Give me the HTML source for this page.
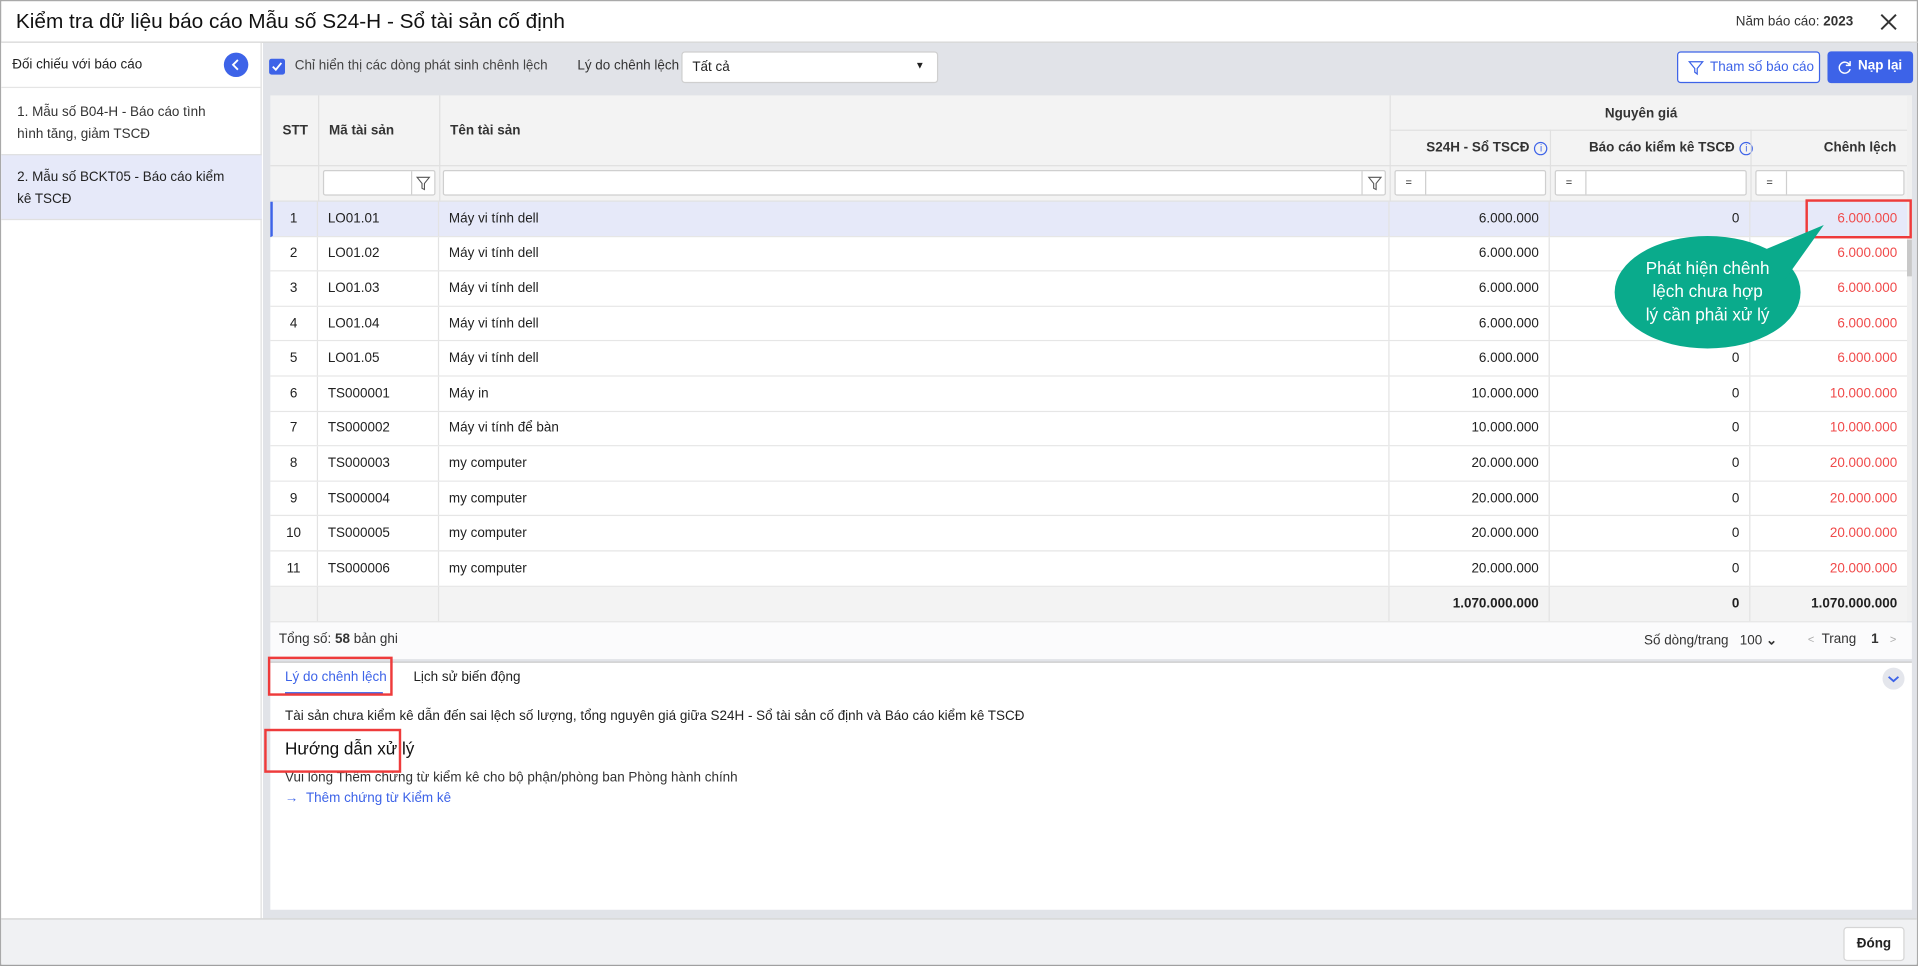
<!DOCTYPE html>
<html><head><meta charset="utf-8">
<style>
*{box-sizing:border-box;margin:0;padding:0}
html,body{width:1918px;height:966px;overflow:hidden;background:#fff}
#w{position:absolute;left:0;top:0;width:1568px;height:790px;transform:scale(1.22321,1.2228);transform-origin:0 0;font-family:"Liberation Sans",sans-serif;color:#212121;font-size:11px;background:#fff;border:1px solid #a9a9a9;border-bottom:2px solid #a0a0a0}
.a{position:absolute}
.cell{position:absolute;top:0;height:100%;border-right:1px solid #e3e3e3;display:flex;align-items:center;padding:0 8px;white-space:nowrap}
.r{justify-content:flex-end}
.row{position:absolute;left:220px;width:1338px;height:28.6px;border-bottom:1px solid #e6e6e6;background:#fff}
.red{color:#f04a4a}
.hd{font-weight:bold;font-size:11px;color:#333}
.inp{position:absolute;background:#fff;border:1px solid #cfcfcf;border-radius:2px}
.info{display:inline-block;width:11px;height:11px;border:1.2px solid #3d63e8;border-radius:50%;color:#3d63e8;font-size:8px;line-height:9px;text-align:center;margin-left:4px;font-weight:normal}
</style></head><body>
<div id="w">
<div class="a" style="left:12px;top:7px;font-size:17px;color:#111">Kiểm tra dữ liệu báo cáo Mẫu số S24-H - Sổ tài sản cố định</div>
<div class="a" style="left:1418px;top:11px;font-size:11px;color:#333">Năm báo cáo: <b>2023</b></div>
<svg class="a" style="left:1535px;top:9px" width="16" height="16"><path d="M2 2L14 14M14 2L2 14" stroke="#333" stroke-width="1.6"/></svg>
<div class="a" style="left:0;top:33px;width:1568px;height:1px;background:#d0d0d0"></div>
<div class="a" style="left:0;top:34px;width:213px;height:716px;background:#fff;border-right:1px solid #e0e0e0"></div>
<div class="a" style="left:9px;top:46px;font-size:11px">Đối chiếu với báo cáo</div>
<div class="a" style="left:182px;top:42px;width:20px;height:20px;border-radius:50%;background:#3d63e8"><svg width="20" height="20"><path d="M11.5 6L7.5 10L11.5 14" stroke="#fff" stroke-width="1.5" fill="none"/></svg></div>
<div class="a" style="left:0;top:70px;width:213px;height:1px;background:#e5e5e5"></div>
<div class="a" style="left:13px;top:82px;line-height:18px;font-size:11px;color:#333">1. Mẫu số B04-H - Báo cáo tình<br>hình tăng, giảm TSCĐ</div>
<div class="a" style="left:0;top:125px;width:213px;height:54px;background:#e6e9f9;border-top:1px solid #e0e0e0;border-bottom:1px solid #e0e0e0"></div>
<div class="a" style="left:13px;top:135px;line-height:18px;font-size:11px;color:#222">2. Mẫu số BCKT05 - Báo cáo kiểm<br>kê TSCĐ</div>
<div class="a" style="left:214px;top:34px;width:1352px;height:716px;background:#e1e3e8"></div>
<div class="a" style="left:219px;top:47px;width:13px;height:13px;background:#3d63e8;border-radius:2px"><svg width="13" height="13"><path d="M3 6.5L5.5 9L10 3.5" stroke="#fff" stroke-width="1.5" fill="none"/></svg></div>
<div class="a" style="left:240px;top:47px;color:#444">Chỉ hiển thị các dòng phát sinh chênh lệch</div>
<div class="a" style="left:471px;top:47px;color:#333">Lý do chênh lệch</div>
<div class="a" style="left:556px;top:41px;width:210px;height:26px;background:#fff;border:1px solid #cfcfcf;border-radius:3px"><span class="a" style="left:8px;top:6px">Tất cả</span><span class="a" style="left:190px;top:6px;font-size:8px">▼</span></div>
<div class="a" style="left:1370px;top:41px;width:117px;height:26px;background:#fff;border:1px solid #3d63e8;border-radius:3px;color:#3d63e8"><svg class="a" style="left:8px;top:6px" width="13" height="13"><path d="M1 1.5H12L7.5 7V11.5L5.5 10V7Z" stroke="#3d63e8" fill="none" stroke-width="1"/></svg><span class="a" style="left:26px;top:6px">Tham số báo cáo</span></div>
<div class="a" style="left:1493px;top:41px;width:70px;height:26px;background:#3d63e8;border-radius:3px;color:#fff;font-weight:bold"><svg class="a" style="left:8px;top:7px" width="12" height="12"><path d="M10 4A4.5 4.5 0 1 0 10.5 7.5" stroke="#fff" fill="none" stroke-width="1.2"/><path d="M10.5 1V4.5H7" stroke="#fff" fill="none" stroke-width="1.2"/></svg><span class="a" style="left:25px;top:6px">Nạp lại</span></div>
<div class="a" style="left:220px;top:77px;width:1342px;height:87px;background:#f3f3f3;border-bottom:1px solid #e0e0e0"></div>
<div class="a" style="left:1558px;top:77px;width:4px;height:430px;background:#f0f0f0"></div>
<div class="a" style="left:1558px;top:195px;width:4px;height:30px;background:#c8c8c8"></div>
<div class="a hd" style="left:230px;top:100px">STT</div>
<div class="a" style="left:259px;top:77px;width:1px;height:87px;background:#e0e0e0"></div>
<div class="a hd" style="left:268px;top:100px">Mã tài sản</div>
<div class="a" style="left:358px;top:77px;width:1px;height:87px;background:#e0e0e0"></div>
<div class="a hd" style="left:367px;top:100px">Tên tài sản</div>
<div class="a" style="left:1135px;top:77px;width:1px;height:87px;background:#e0e0e0"></div>
<div class="a hd" style="left:1311px;top:86px">Nguyên giá</div>
<div class="a" style="left:1135px;top:105px;width:423px;height:1px;background:#e0e0e0"></div>
<div class="a" style="left:220px;top:134px;width:1338px;height:1px;background:#e0e0e0"></div>
<div class="a hd" style="left:1165px;top:114px">S24H - Sổ TSCĐ<span class="info">i</span></div>
<div class="a" style="left:1266px;top:105px;width:1px;height:59px;background:#e0e0e0"></div>
<div class="a hd" style="left:1298px;top:114px">Báo cáo kiểm kê TSCĐ<span class="info">i</span></div>
<div class="a" style="left:1430px;top:105px;width:1px;height:59px;background:#e0e0e0"></div>
<div class="a hd" style="left:1490px;top:114px">Chênh lệch</div>
<div class="inp" style="left:263px;top:138px;width:92px;height:21px"><div class="a" style="left:71px;top:0;width:1px;height:19px;background:#cfcfcf"></div><svg class="a" style="left:75px;top:4px" width="12" height="12"><path d="M1 1H11L7 6V11L5 10V6Z" stroke="#555" fill="none" stroke-width=".9"/></svg></div>
<div class="inp" style="left:361px;top:138px;width:771px;height:21px"><div class="a" style="left:750px;top:0;width:1px;height:19px;background:#cfcfcf"></div><svg class="a" style="left:755px;top:4px" width="12" height="12"><path d="M1 1H11L7 6V11L5 10V6Z" stroke="#555" fill="none" stroke-width=".9"/></svg></div>
<div class="inp" style="left:1139px;top:138px;width:124px;height:21px"><span class="a" style="left:8px;top:4px;font-size:9px">=</span><div class="a" style="left:24px;top:0;width:1px;height:19px;background:#cfcfcf"></div></div>
<div class="inp" style="left:1270px;top:138px;width:157px;height:21px"><span class="a" style="left:8px;top:4px;font-size:9px">=</span><div class="a" style="left:24px;top:0;width:1px;height:19px;background:#cfcfcf"></div></div>
<div class="inp" style="left:1434px;top:138px;width:122px;height:21px"><span class="a" style="left:8px;top:4px;font-size:9px">=</span><div class="a" style="left:24px;top:0;width:1px;height:19px;background:#cfcfcf"></div></div>
<div class="row" style="top:164px;background:#e6e9f9;border-left:2px solid #3d63e8"><div class="cell" style="left:-2px;width:39px;justify-content:center">1</div><div class="cell" style="left:37px;width:99px">LO01.01</div><div class="cell" style="left:136px;width:777px">Máy vi tính dell</div><div class="cell r" style="left:913px;width:131px">6.000.000</div><div class="cell r" style="left:1044px;width:164px">0</div><div class="cell r red" style="left:1208px;width:128px;border:0">6.000.000</div></div>
<div class="row" style="top:192.6px"><div class="cell" style="left:0;width:39px;justify-content:center">2</div><div class="cell" style="left:39px;width:99px">LO01.02</div><div class="cell" style="left:138px;width:777px">Máy vi tính dell</div><div class="cell r" style="left:915px;width:131px">6.000.000</div><div class="cell r" style="left:1046px;width:164px">0</div><div class="cell r red" style="left:1210px;width:128px;border:0">6.000.000</div></div>
<div class="row" style="top:221.2px"><div class="cell" style="left:0;width:39px;justify-content:center">3</div><div class="cell" style="left:39px;width:99px">LO01.03</div><div class="cell" style="left:138px;width:777px">Máy vi tính dell</div><div class="cell r" style="left:915px;width:131px">6.000.000</div><div class="cell r" style="left:1046px;width:164px">0</div><div class="cell r red" style="left:1210px;width:128px;border:0">6.000.000</div></div>
<div class="row" style="top:249.8px"><div class="cell" style="left:0;width:39px;justify-content:center">4</div><div class="cell" style="left:39px;width:99px">LO01.04</div><div class="cell" style="left:138px;width:777px">Máy vi tính dell</div><div class="cell r" style="left:915px;width:131px">6.000.000</div><div class="cell r" style="left:1046px;width:164px">0</div><div class="cell r red" style="left:1210px;width:128px;border:0">6.000.000</div></div>
<div class="row" style="top:278.4px"><div class="cell" style="left:0;width:39px;justify-content:center">5</div><div class="cell" style="left:39px;width:99px">LO01.05</div><div class="cell" style="left:138px;width:777px">Máy vi tính dell</div><div class="cell r" style="left:915px;width:131px">6.000.000</div><div class="cell r" style="left:1046px;width:164px">0</div><div class="cell r red" style="left:1210px;width:128px;border:0">6.000.000</div></div>
<div class="row" style="top:307px"><div class="cell" style="left:0;width:39px;justify-content:center">6</div><div class="cell" style="left:39px;width:99px">TS000001</div><div class="cell" style="left:138px;width:777px">Máy in</div><div class="cell r" style="left:915px;width:131px">10.000.000</div><div class="cell r" style="left:1046px;width:164px">0</div><div class="cell r red" style="left:1210px;width:128px;border:0">10.000.000</div></div>
<div class="row" style="top:335.6px"><div class="cell" style="left:0;width:39px;justify-content:center">7</div><div class="cell" style="left:39px;width:99px">TS000002</div><div class="cell" style="left:138px;width:777px">Máy vi tính để bàn</div><div class="cell r" style="left:915px;width:131px">10.000.000</div><div class="cell r" style="left:1046px;width:164px">0</div><div class="cell r red" style="left:1210px;width:128px;border:0">10.000.000</div></div>
<div class="row" style="top:364.2px"><div class="cell" style="left:0;width:39px;justify-content:center">8</div><div class="cell" style="left:39px;width:99px">TS000003</div><div class="cell" style="left:138px;width:777px">my computer</div><div class="cell r" style="left:915px;width:131px">20.000.000</div><div class="cell r" style="left:1046px;width:164px">0</div><div class="cell r red" style="left:1210px;width:128px;border:0">20.000.000</div></div>
<div class="row" style="top:392.8px"><div class="cell" style="left:0;width:39px;justify-content:center">9</div><div class="cell" style="left:39px;width:99px">TS000004</div><div class="cell" style="left:138px;width:777px">my computer</div><div class="cell r" style="left:915px;width:131px">20.000.000</div><div class="cell r" style="left:1046px;width:164px">0</div><div class="cell r red" style="left:1210px;width:128px;border:0">20.000.000</div></div>
<div class="row" style="top:421.4px"><div class="cell" style="left:0;width:39px;justify-content:center">10</div><div class="cell" style="left:39px;width:99px">TS000005</div><div class="cell" style="left:138px;width:777px">my computer</div><div class="cell r" style="left:915px;width:131px">20.000.000</div><div class="cell r" style="left:1046px;width:164px">0</div><div class="cell r red" style="left:1210px;width:128px;border:0">20.000.000</div></div>
<div class="row" style="top:450px"><div class="cell" style="left:0;width:39px;justify-content:center">11</div><div class="cell" style="left:39px;width:99px">TS000006</div><div class="cell" style="left:138px;width:777px">my computer</div><div class="cell r" style="left:915px;width:131px">20.000.000</div><div class="cell r" style="left:1046px;width:164px">0</div><div class="cell r red" style="left:1210px;width:128px;border:0">20.000.000</div></div>
<div class="row" style="top:478.6px;background:#f3f3f3;font-weight:bold;height:29px"><div class="cell" style="left:0;width:39px"></div><div class="cell" style="left:39px;width:99px"></div><div class="cell" style="left:138px;width:777px"></div><div class="cell r" style="left:915px;width:131px">1.070.000.000</div><div class="cell r" style="left:1046px;width:164px">0</div><div class="cell r" style="left:1210px;width:128px;border:0">1.070.000.000</div></div>
<div class="a" style="left:220px;top:508px;width:1342px;height:30px;background:#fbfbfc"></div>
<div class="a" style="left:227px;top:516px;color:#333">Tổng số: <b>58</b> bản ghi</div>
<div class="a" style="left:1343px;top:516px;color:#333">Số dòng/trang &nbsp;&nbsp;100 <b>⌄</b></div>
<div class="a" style="left:1477px;top:516px;color:#333"><span style="color:#aaa;font-size:9px">&lt;</span>&nbsp; Trang &nbsp;&nbsp;&nbsp;<b>1</b>&nbsp;&nbsp;&nbsp;<span style="color:#aaa;font-size:9px">&gt;</span></div>
<div class="a" style="left:220px;top:540px;width:1342px;height:203px;background:#fff;border-top:1px solid #c8c8c8"></div>
<div class="a" style="left:232px;top:547px;color:#3d63e8">Lý do chênh lệch</div>
<div class="a" style="left:232px;top:565px;width:80px;height:2px;background:#3d63e8"></div>
<div class="a" style="left:337px;top:547px;color:#222">Lịch sử biến động</div>
<div class="a" style="left:1538px;top:545px;width:18px;height:18px;border-radius:50%;background:#e4e6ec"><svg width="18" height="18"><path d="M5 7.5L9 11L13 7.5" stroke="#3d63e8" stroke-width="1.5" fill="none"/></svg></div>
<div class="a" style="left:232px;top:579px;color:#222">Tài sản chưa kiểm kê dẫn đến sai lệch số lượng, tổng nguyên giá giữa S24H - Sổ tài sản cố định và Báo cáo kiểm kê TSCĐ</div>
<div class="a" style="left:232px;top:603px;font-size:14px;color:#111">Hướng dẫn xử lý</div>
<div class="a" style="left:232px;top:629px;color:#333">Vui lòng Thêm chứng từ kiểm kê cho bộ phận/phòng ban Phòng hành chính</div>
<div class="a" style="left:232px;top:646px;color:#3d63e8">→ &nbsp;Thêm chứng từ Kiểm kê</div>
<div class="a" style="left:218px;top:536px;width:102px;height:32px;border:2px solid #ee3b3b"></div>
<div class="a" style="left:215px;top:595px;width:112px;height:36px;border:2px solid #ee3b3b"></div>
<div class="a" style="left:1475px;top:162px;width:87px;height:32px;border:2px solid #ee3b3b"></div>
<svg class="a" style="left:1300px;top:170px" width="240" height="130"><ellipse cx="95" cy="68" rx="76" ry="46" fill="#0aab8c"/><path d="M135 36 L190 13 L158 58 Z" fill="#0aab8c"/></svg>
<div class="a" style="left:1315px;top:209px;width:160px;text-align:center;color:#fff;font-size:14px;line-height:19px">Phát hiện chênh<br>lệch chưa hợp<br>lý cần phải xử lý</div>
<div class="a" style="left:0;top:750px;width:1566px;height:38px;background:#f0f1f3;border-top:1px solid #d0d0d0"></div>
<div class="a" style="left:1506px;top:757px;width:50px;height:28px;background:#fff;border:1px solid #d5d5d5;border-radius:3px;text-align:center;line-height:26px;font-weight:bold;color:#222">Đóng</div>
</div>
</body></html>
